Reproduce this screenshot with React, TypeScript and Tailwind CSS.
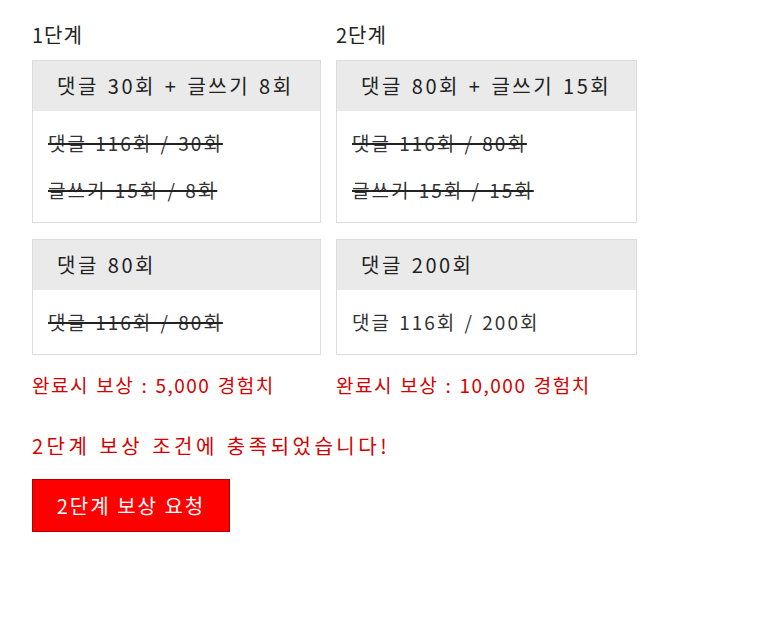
const stages = [
  {
    title: "1단계",
    width: "w-[289px]",
    missions: [
      {
        header: "댓글 30회 + 글쓰기 8회",
        rows: [
          { text: "댓글 116회 / 30회", done: true },
          { text: "글쓰기 15회 / 8회", done: true },
        ],
      },
      {
        header: "댓글 80회",
        rows: [{ text: "댓글 116회 / 80회", done: true }],
      },
    ],
    reward: "완료시 보상 : 5,000 경험치",
  },
  {
    title: "2단계",
    width: "w-[301px]",
    missions: [
      {
        header: "댓글 80회 + 글쓰기 15회",
        rows: [
          { text: "댓글 116회 / 80회", done: true },
          { text: "글쓰기 15회 / 15회", done: true },
        ],
      },
      {
        header: "댓글 200회",
        rows: [{ text: "댓글 116회 / 200회", done: false }],
      },
    ],
    reward: "완료시 보상 : 10,000 경험치",
  },
];

type Mission = (typeof stages)[number]["missions"][number];

function MissionCard({ mission }: { mission: Mission }) {
  return (
    <div className="border border-[#dcdcdc] bg-white">
      <div className="h-[50px] bg-[#eaeaea] px-6 text-[20px] leading-[50px] tracking-[2.5px] [word-spacing:2px] text-[#222] whitespace-nowrap">
        {mission.header}
      </div>
      <div className="flex flex-col gap-[15px] px-[15px] py-4">
        {mission.rows.map((row) => (
          <p
            key={row.text}
            className={`h-8 text-[19px] leading-8 tracking-[2px] [word-spacing:2px] text-[#333] whitespace-nowrap ${
              row.done ? "line-through decoration-2 decoration-[#222]" : ""
            }`}
          >
            {row.text}
          </p>
        ))}
      </div>
    </div>
  );
}

export default function App() {
  return (
    <div
      className="min-h-screen bg-white px-8 pt-[19px] text-[#222]"
      style={{ fontFamily: '"Noto Sans CJK KR", "Noto Sans", sans-serif' }}
    >
      <div className="flex items-start gap-[15px]">
        {stages.map((stage) => (
          <div key={stage.title} className={`flex flex-col ${stage.width}`}>
            <h2 className="h-8 text-[20px] font-normal leading-8 tracking-[1px]">{stage.title}</h2>
            <div className="mt-[9px] flex flex-col gap-4">
              {stage.missions.map((m) => (
                <MissionCard key={m.header} mission={m} />
              ))}
            </div>
            <p className="mt-[14px] h-8 text-[19px] leading-8 tracking-[1.5px] [word-spacing:1.5px] text-[#d40000] whitespace-nowrap">
              {stage.reward}
            </p>
          </div>
        ))}
      </div>
      <p className="mt-[29px] h-8 text-[20px] leading-8 tracking-[3.5px] [word-spacing:1px] text-[#d40000]">
        2단계 보상 조건에 충족되었습니다!
      </p>
      <button className="mt-[17px] h-[53px] w-[198px] border border-[#b00000] bg-[#ff0000] text-[20px] tracking-[2px] text-white">
        2단계 보상 요청
      </button>
    </div>
  );
}
